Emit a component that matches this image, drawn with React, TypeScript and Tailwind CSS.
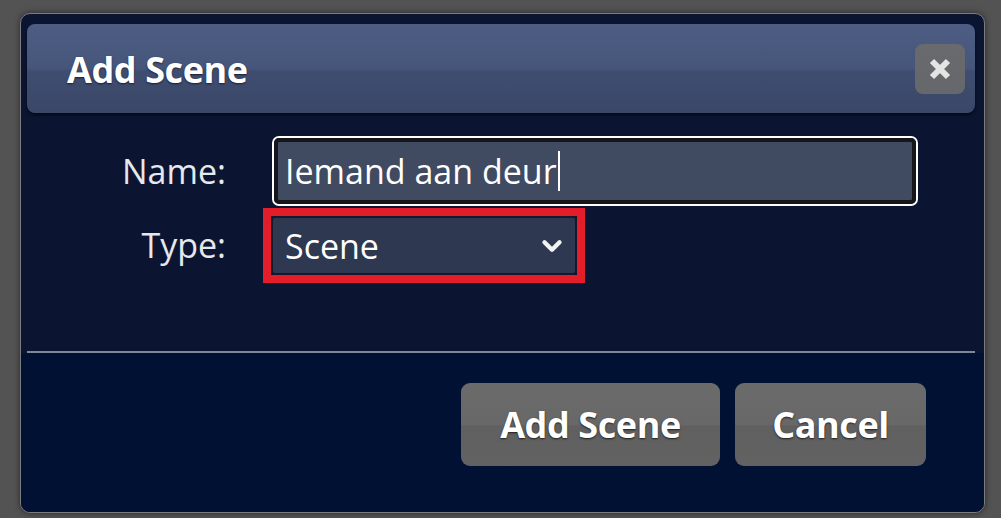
import React from "react";
import { ChevronDown } from "lucide-react";

const AddSceneDialog = () => {
  return (
    <div className="w-[965px] h-[500px] rounded-[10px] border border-[#7c7c80] bg-[#0b1531] flex flex-col overflow-hidden shadow-[0_0_6px_rgba(0,0,0,0.5)]">
      {/** Title bar */}
      <div className="ml-[6px] mr-[9px] mt-[10px] h-[89px] shrink-0 rounded-[8px] bg-[linear-gradient(to_bottom,#4e5d83_0%,#46557a_50%,#3f4d70_53%,#3a4768_100%)] shadow-[0_2px_3px_rgba(0,0,0,0.6)] flex items-center justify-between pl-[40px] pr-[10px]">
        <h1 className="text-[36px] font-bold text-white [text-shadow:0_1px_2px_rgba(0,0,0,0.6)] tracking-[-0.4px] mt-[3px]">
          Add Scene
        </h1>
        <button className="w-[50px] h-[50px] rounded-[8px] bg-[#6b6b6b]/90 flex items-center justify-center">
          <svg width="24" height="24" viewBox="0 0 24 24">
            <path d="M4 4 L20 20 M20 4 L4 20" stroke="#e4e4e4" strokeWidth="6" strokeLinecap="butt" />
          </svg>
        </button>
      </div>

      {/** Form */}
      <div className="flex flex-col gap-[2px] mt-[23px]">
        <div className="flex items-center">
          <label className="w-[205px] text-right text-[34px] text-[#e6e8ee]">Name:</label>
          <div className="ml-[46px] w-[646px] h-[70px] rounded-[7px] border-2 border-white">
            <div className="h-full rounded-[5px] border-[4px] border-[#14161c] bg-[#404a60] flex items-center pl-[7px]">
              <span className="text-[34px] text-white leading-none">Iemand aan deur</span>
              <span className="w-[2px] h-[40px] bg-white ml-[1px]" />
            </div>
          </div>
        </div>

        <div className="flex items-center">
          <label className="w-[205px] text-right text-[34px] text-[#e6e8ee]">Type:</label>
          <div className="ml-[37px] w-[322px] h-[75px] border-[8px] border-[#e31e2a]">
            <div className="h-full rounded-[4px] border-2 border-[#141a2c] bg-[#2e3850] flex items-center justify-between pl-[12px] pr-[8px]">
              <span className="text-[34px] text-white leading-none">Scene</span>
              <ChevronDown size={30} strokeWidth={3.5} color="#f2f2f2" />
            </div>
          </div>
        </div>
      </div>

      <div className="mt-[68px] ml-[6px] mr-[9px] h-[2px] bg-[#7d879b]" />

      {/** Actions */}
      <div className="flex-1 bg-[#011134] flex justify-end items-start gap-[15px] pt-[30px] pr-[58px]">
        <button className="w-[259px] h-[83px] rounded-[9px] bg-[linear-gradient(to_bottom,#6b6b6b_0%,#686868_50%,#606060_52%,#626262_100%)] text-[36px] font-bold text-white tracking-[-0.4px] [text-shadow:0_1px_2px_rgba(0,0,0,0.7)]">
          Add Scene
        </button>
        <button className="w-[191px] h-[83px] rounded-[9px] bg-[linear-gradient(to_bottom,#6b6b6b_0%,#686868_50%,#606060_52%,#626262_100%)] text-[36px] font-bold text-white tracking-[-0.4px] [text-shadow:0_1px_2px_rgba(0,0,0,0.7)]">
          Cancel
        </button>
      </div>
    </div>
  );
};

export default function App() {
  return (
    <div className="w-[1001px] h-[518px] bg-[#535353] pt-[13px] pl-[20px] font-['Open_Sans','Liberation_Sans',sans-serif]">
      <AddSceneDialog />
    </div>
  );
}
